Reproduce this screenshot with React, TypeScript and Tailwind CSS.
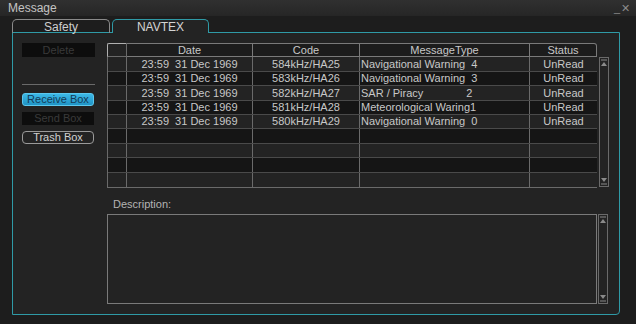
import React from "react";

const rows = [
  { date: "23:59  31 Dec 1969", code: "584kHz/HA25", type: "Navigational Warning  4", status: "UnRead" },
  { date: "23:59  31 Dec 1969", code: "583kHz/HA26", type: "Navigational Warning  3", status: "UnRead" },
  { date: "23:59  31 Dec 1969", code: "582kHz/HA27", type: "SAR / Piracy              2", status: "UnRead" },
  { date: "23:59  31 Dec 1969", code: "581kHz/HA28", type: "Meteorological Waring1", status: "UnRead" },
  { date: "23:59  31 Dec 1969", code: "580kHz/HA29", type: "Navigational Warning  0", status: "UnRead" },
  null,
  null,
  null,
  null,
];

const heights = ["h-[15px]", "h-[14px]", "h-[15px]", "h-[14px]", "h-[14px]", "h-[15px]", "h-[14px]", "h-[15px]", "h-[14px]"];

function ArrowUp() {
  return (
    <svg width="8" height="8" viewBox="0 0 8 8" className="block">
      <line x1="1" y1="1" x2="7" y2="1" stroke="#8a8a8a" strokeWidth="1" />
      <path d="M1 7 L4 3 L7 7 Z" fill="#8a8a8a" />
    </svg>
  );
}

function ArrowDown() {
  return (
    <svg width="8" height="8" viewBox="0 0 8 8" className="block">
      <path d="M1 1 L4 5 L7 1 Z" fill="#8a8a8a" />
      <line x1="1" y1="7" x2="7" y2="7" stroke="#8a8a8a" strokeWidth="1" />
    </svg>
  );
}

function ScrollBar({ height }: { height: string }) {
  return (
    <div className={`${height} w-[10px] border border-[#6a6a6a] flex flex-col justify-between items-center py-[1px]`}>
      <ArrowUp />
      <ArrowDown />
    </div>
  );
}

export default function App() {
  return (
    <div
      className="w-[636px] h-[324px] bg-[#1d1d1d] text-[#c8c8c8] overflow-hidden"
      style={{ fontFamily: '"Liberation Sans", Arial, sans-serif' }}
    >
      {/* title bar */}
      <div className="h-[16px] bg-gradient-to-b from-[#303030] to-[#262626] flex items-center justify-between pl-[8px] pr-[5px]">
        <span className="text-[12px] leading-none text-[#c4c4c4]">Message</span>
        <span className="text-[11px] leading-none text-[#8a8a8a] tracking-[1px]">_✕</span>
      </div>

      {/* tabs */}
      <div className="flex pl-[12px] pt-[3px] gap-[2px] h-[17px]">
        <div className="w-[98px] h-[14px] border border-b-0 border-[#8a8a8a] rounded-t-[5px] flex items-center justify-center text-[12px] text-[#cfcfcf] mt-[0px]">
          Safety
        </div>
        <div className="w-[97px] h-[14px] border border-b-0 border-[#2f9aa6] rounded-t-[5px] flex items-center justify-center text-[12px] text-[#d4d4d4] relative z-10 bg-[#232323]">
          NAVTEX
        </div>
      </div>

      {/* panel */}
      <div className="ml-[12px] w-[608px] h-[283px] border border-[#2f9aa6] rounded-br-[4px] bg-[#232323] -mt-[1px] flex pt-[10px]">
        {/* left buttons */}
        <div className="ml-[9px] w-[73px] flex flex-col">
          <div className="h-[14px] bg-[#0d0d0d] text-[11px] text-[#3a3a3a] flex items-center justify-center">Delete</div>
          <div className="mt-[27px] h-px bg-[#6a6a6a]" />
          <div className="mt-[8px] h-[13px] w-[72px] rounded-[3px] bg-gradient-to-b from-[#3cb8e6] to-[#1f94c6] border border-[#5cc8ee] text-[11px] text-[#133a56] flex items-center justify-center">
            Receive Box
          </div>
          <div className="mt-[6px] h-[13px] w-[72px] bg-[#0d0d0d] text-[11px] text-[#3a3a3a] flex items-center justify-center">
            Send Box
          </div>
          <div className="mt-[6px] h-[13px] w-[72px] rounded-[4px] border border-[#9a9a9a] text-[11px] text-[#d0d0d0] flex items-center justify-center">
            Trash Box
          </div>
        </div>

        {/* right */}
        <div className="ml-[12px] flex flex-col">
          <div className="flex">
            <div className="w-[490px] flex flex-col text-[11px]">
              {/* header */}
              <div className="flex h-[14px]">
                <div className="w-[20px] border border-[#b0b0b0] border-r-[#6a6a6a] border-b-[#6a6a6a] rounded-tl-[2px]" />
                <div className="w-[126px] border border-l-0 border-[#7a7a7a] bg-[#1c1c1c] flex items-center justify-center">Date</div>
                <div className="w-[107px] border border-l-0 border-[#7a7a7a] bg-[#1c1c1c] flex items-center justify-center">Code</div>
                <div className="w-[170px] border border-l-0 border-[#7a7a7a] bg-[#1c1c1c] flex items-center justify-center">MessageType</div>
                <div className="w-[67px] border border-l-0 border-[#7a7a7a] bg-[#1c1c1c] rounded-tr-[3px] flex items-center justify-center">Status</div>
              </div>
              {/* body */}
              <div className="border-l border-b border-[#6a6a6a]">
                {rows.map((r, i) => (
                  <div
                    key={i}
                    className={`flex ${heights[i]} border-b border-[#4a4a4a] ${i % 2 === 0 ? "bg-[#232323]" : "bg-[#151515]"} ${i === 8 ? "border-b-0" : ""}`}
                  >
                    <div className="w-[19px] border-r border-[#6a6a6a]" />
                    <div className="w-[126px] border-r border-[#6a6a6a] flex items-center justify-center whitespace-pre">{r?.date}</div>
                    <div className="w-[107px] border-r border-[#6a6a6a] flex items-center justify-center">{r?.code}</div>
                    <div className="w-[170px] border-r border-[#6a6a6a] flex items-center pl-[1px] whitespace-pre">{r?.type}</div>
                    <div className="w-[67px] flex items-center justify-center">{r?.status}</div>
                  </div>
                ))}
              </div>
            </div>
            <div className="ml-[2px] mt-[14px]">
              <ScrollBar height="h-[130px]" />
            </div>
          </div>

          <div className="mt-[9px] pl-[6px] text-[11px] text-[#b4b4b4] leading-[14px]">Description:</div>

          <div className="mt-[3px] flex">
            <div className="w-[490px] h-[90px] border border-[#7a7a7a]" />
            <div className="ml-[1px]">
              <ScrollBar height="h-[90px]" />
            </div>
          </div>
        </div>
      </div>
    </div>
  );
}
